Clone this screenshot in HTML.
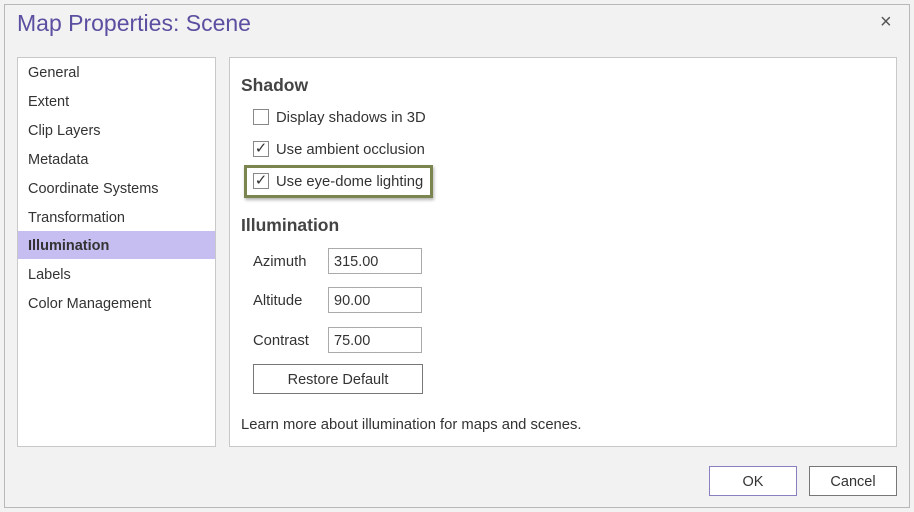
<!DOCTYPE html><html><head><style>
body{margin:0;width:914px;height:512px;background:#f2f2f2;font-family:"Liberation Sans",sans-serif;position:relative;overflow:hidden;color:#333}
.a{position:absolute}
.frame{left:4px;top:4px;width:906px;height:504px;border:1px solid #b8b8b8;box-sizing:border-box}
.list{left:17px;top:57px;width:199px;height:390px;background:#fff;border:1px solid #c8c8c8;box-sizing:border-box}
.li{position:absolute;left:0;width:197px;height:28px;line-height:30px;padding-left:10px;font-size:14.5px;box-sizing:border-box}
.panel{left:229px;top:57px;width:668px;height:390px;background:#fff;border:1px solid #c8c8c8;box-sizing:border-box}
.h{font-size:17.5px;font-weight:bold;color:#444}
.cb{width:16px;height:16px;border:1px solid #888;box-sizing:border-box;background:#fff}
.t{font-size:14.8px}
.in{width:94px;height:26px;border:1px solid #aaa;box-sizing:border-box;background:#fff;font-size:14.5px;line-height:26px;padding-left:5px}
.btn{border:1px solid #777;box-sizing:border-box;background:#fff;text-align:center;font-size:14.5px}
</style></head><body>
<div class="a frame"></div>
<div class="a" style="left:17px;top:10px;font-size:23px;color:#5a4fa0">Map Properties: Scene</div>
<div class="a" style="left:880px;top:11px;font-size:20px;color:#555">×</div>
<div class="a list">
<div class="li" style="top:0">General</div>
<div class="li" style="top:29px">Extent</div>
<div class="li" style="top:58px">Clip Layers</div>
<div class="li" style="top:87px">Metadata</div>
<div class="li" style="top:116px">Coordinate Systems</div>
<div class="li" style="top:145px">Transformation</div>
<div class="li" style="top:173px;background:#c6bdf0;font-weight:bold;color:#333">Illumination</div>
<div class="li" style="top:202px">Labels</div>
<div class="li" style="top:231px">Color Management</div>
</div>
<div class="a panel"></div>
<div class="a h" style="left:241px;top:75px">Shadow</div>
<div class="a cb" style="left:253px;top:109px"></div>
<div class="a t" style="left:276px;top:110px">Display shadows in 3D</div>
<div class="a cb" style="left:253px;top:141px"></div>
<div class="a t" style="left:253px;top:139px;font-size:15px;width:16px;text-align:center">✓</div>
<div class="a t" style="left:276px;top:142px">Use ambient occlusion</div>
<div class="a" style="left:244px;top:165px;width:189px;height:33px;border:3px solid #7b8550;box-sizing:border-box;box-shadow:1px 2px 3px rgba(0,0,0,.3)"></div>
<div class="a cb" style="left:253px;top:173px"></div>
<div class="a t" style="left:253px;top:171px;font-size:15px;width:16px;text-align:center">✓</div>
<div class="a t" style="left:276px;top:174px">Use eye-dome lighting</div>
<div class="a h" style="left:241px;top:215px">Illumination</div>
<div class="a t" style="left:253px;top:254px">Azimuth</div>
<div class="a in" style="left:328px;top:248px">315.00</div>
<div class="a t" style="left:253px;top:293px">Altitude</div>
<div class="a in" style="left:328px;top:287px">90.00</div>
<div class="a t" style="left:253px;top:333px">Contrast</div>
<div class="a in" style="left:328px;top:327px">75.00</div>
<div class="a btn" style="left:253px;top:364px;width:170px;height:30px;line-height:30px">Restore Default</div>
<div class="a t" style="left:241px;top:417px">Learn more about illumination for maps and scenes.</div>
<div class="a btn" style="left:709px;top:466px;width:88px;height:30px;line-height:30px;border-color:#8a80c0">OK</div>
<div class="a btn" style="left:809px;top:466px;width:88px;height:30px;line-height:30px">Cancel</div>
</body></html>
